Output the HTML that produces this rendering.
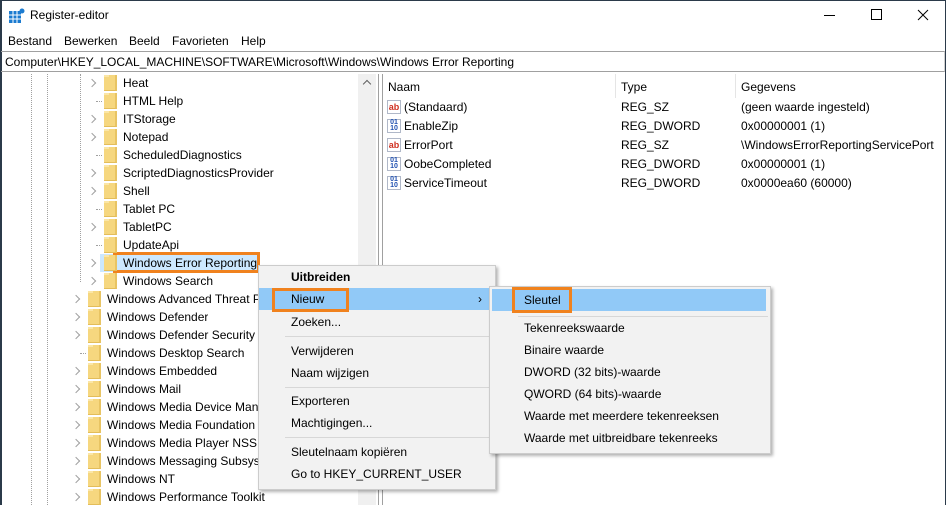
<!DOCTYPE html>
<html><head><meta charset="utf-8"><style>
*{margin:0;padding:0;box-sizing:border-box}
body{width:946px;height:505px;overflow:hidden;background:#fff;font-family:"Liberation Sans",sans-serif;font-size:12px;color:#000;position:relative}
.a{position:absolute;white-space:nowrap}
.t{position:absolute;white-space:nowrap;line-height:18px}
.f{position:absolute;width:13px;height:16px;background:#f6d77f;border-right:2px solid #e8c463;border-bottom:1px solid #e3bd5a}
.f::before{content:"";position:absolute;left:0;top:0;width:5px;height:2px;background:#fbe6a6}
.ch{position:absolute;width:6px;height:6px;border-right:1px solid #a0a0a0;border-top:1px solid #a0a0a0;transform:rotate(45deg)}
.dv{position:absolute;width:0;border-left:1px dotted #a0a0a0}
.dh{position:absolute;height:0;border-top:1px dotted #a0a0a0}
.ico{position:absolute;width:14px;height:14px;border:1px solid #b0b8c8;background:#fff;font-size:9px;font-weight:bold;line-height:12px;text-align:center}
.mi{position:absolute;left:291px;line-height:14px}
.si{position:absolute;left:524px;line-height:14px}
.sep{position:absolute;height:1px;background:#d7d7d7}
</style></head><body>
<div class="a" style="left:0;top:0;width:2px;height:505px;background:#2b3a4a"></div>
<div class="a" style="right:0;top:0;width:1px;height:505px;background:#2b3a4a"></div>
<div class="a" style="left:0;top:0;width:946px;height:1px;background:#2b3a4a"></div>
<svg class="a" style="left:9px;top:8px" width="16" height="16" viewBox="0 0 16 16">
<rect x="0" y="3" width="12" height="12" fill="#1b7bd0"/>
<g stroke="#fff" stroke-width="1"><line x1="4" y1="3" x2="4" y2="15"/><line x1="8" y1="3" x2="8" y2="15"/><line x1="0" y1="7" x2="12" y2="7"/><line x1="0" y1="11" x2="12" y2="11"/></g>
<circle cx="13" cy="3" r="2.5" fill="#1b7bd0"/></svg>
<div class="a" style="left:30px;top:8px;font-size:12px">Register-editor</div>
<div class="a" style="left:824px;top:15px;width:11px;height:1px;background:#000"></div>
<div class="a" style="left:871px;top:9px;width:11px;height:11px;border:1px solid #000"></div>
<svg class="a" style="left:917px;top:9px" width="12" height="12"><path d="M1 1L11 11M11 1L1 11" stroke="#000" stroke-width="1"/></svg>
<div class="a" style="left:8px;top:34px">Bestand</div>
<div class="a" style="left:64px;top:34px">Bewerken</div>
<div class="a" style="left:129px;top:34px">Beeld</div>
<div class="a" style="left:172px;top:34px">Favorieten</div>
<div class="a" style="left:241px;top:34px">Help</div>
<div class="a" style="left:1px;top:51px;width:944px;height:21px;border-top:1px solid #a0a0a0;border-bottom:1px solid #a0a0a0;border-right:1px solid #d0d0d0"></div>
<div class="a" style="left:5px;top:55px">Computer\HKEY_LOCAL_MACHINE\SOFTWARE\Microsoft\Windows\Windows Error Reporting</div>
<div class="dv" style="left:31px;top:74px;height:431px"></div>
<div class="dv" style="left:47px;top:74px;height:431px"></div>
<div class="dv" style="left:80px;top:74px;height:208px"></div>
<div class="dh" style="left:96px;top:101px;width:6px"></div>
<div class="dh" style="left:96px;top:155px;width:6px"></div>
<div class="dh" style="left:96px;top:209px;width:6px"></div>
<div class="dh" style="left:96px;top:245px;width:6px"></div>
<div class="dh" style="left:80px;top:353px;width:6px"></div>
<div class="a" style="left:100px;top:254px;width:158px;height:18px;background:#cce8ff"></div>
<div class="a" style="left:113px;top:252px;width:147px;height:21px;border:3px solid #f0821e"></div>
<div id="tree"></div>
<div class="a" style="left:358px;top:74px;width:18px;height:431px;background:#f0f0f0"></div>
<div class="ch" style="left:364px;top:81px;transform:rotate(-45deg);border-color:#606060"></div>
<div class="a" style="left:378px;top:74px;width:1px;height:431px;background:#a0a0a0"></div>
<div class="a" style="left:382px;top:74px;width:1px;height:431px;background:#a0a0a0"></div>
<div class="a" style="left:388px;top:80px">Naam</div>
<div class="a" style="left:615px;top:74px;width:1px;height:24px;background:#e5e5e5"></div>
<div class="a" style="left:621px;top:80px">Type</div>
<div class="a" style="left:735px;top:74px;width:1px;height:24px;background:#e5e5e5"></div>
<div class="a" style="left:741px;top:80px">Gegevens</div>
<div id="list"></div>
<div class="a" style="left:258px;top:265px;width:238px;height:225px;background:#f2f2f2;border:1px solid #ccc;box-shadow:2px 2px 3px rgba(0,0,0,.3)"></div>
<div class="a" style="left:259px;top:288px;width:236px;height:22px;background:#91c9f7"></div>
<div class="a" style="left:272px;top:288px;width:77px;height:24px;border:3px solid #f0821e"></div>
<div class="mi" style="top:270px;font-weight:bold">Uitbreiden</div>
<div class="mi" style="top:292px">Nieuw</div>
<div class="a" style="left:478px;top:292px">›</div>
<div class="mi" style="top:315px">Zoeken...</div>
<div class="sep" style="left:285px;top:336px;width:207px"></div>
<div class="mi" style="top:344px">Verwijderen</div>
<div class="mi" style="top:366px">Naam wijzigen</div>
<div class="sep" style="left:285px;top:387px;width:207px"></div>
<div class="mi" style="top:394px">Exporteren</div>
<div class="mi" style="top:416px">Machtigingen...</div>
<div class="sep" style="left:285px;top:437px;width:207px"></div>
<div class="mi" style="top:445px">Sleutelnaam kopiëren</div>
<div class="mi" style="top:467px">Go to HKEY_CURRENT_USER</div>
<div class="a" style="left:489px;top:286px;width:282px;height:168px;background:#f2f2f2;border:1px solid #ccc;box-shadow:2px 2px 3px rgba(0,0,0,.3)"></div>
<div class="a" style="left:492px;top:289px;width:274px;height:22px;background:#91c9f7"></div>
<div class="a" style="left:512px;top:287px;width:60px;height:26px;border:3px solid #f0821e"></div>
<div class="si" style="top:293px">Sleutel</div>
<div class="sep" style="left:518px;top:316px;width:250px"></div>
<div class="si" style="top:321px">Tekenreekswaarde</div>
<div class="si" style="top:343px">Binaire waarde</div>
<div class="si" style="top:365px">DWORD (32 bits)-waarde</div>
<div class="si" style="top:387px">QWORD (64 bits)-waarde</div>
<div class="si" style="top:409px">Waarde met meerdere tekenreeksen</div>
<div class="si" style="top:431px">Waarde met uitbreidbare tekenreeks</div>
<script>
var T=[["Heat",2,1],["HTML Help",2,0],["ITStorage",2,1],["Notepad",2,1],["ScheduledDiagnostics",2,0],["ScriptedDiagnosticsProvider",2,1],["Shell",2,1],["Tablet PC",2,0],["TabletPC",2,1],["UpdateApi",2,0],["Windows Error Reporting",2,1],["Windows Search",2,1],["Windows Advanced Threat Protection",1,1],["Windows Defender",1,1],["Windows Defender Security Center",1,1],["Windows Desktop Search",1,0],["Windows Embedded",1,1],["Windows Mail",1,1],["Windows Media Device Manager",1,1],["Windows Media Foundation",1,1],["Windows Media Player NSS",1,1],["Windows Messaging Subsystem",1,1],["Windows NT",1,1],["Windows Performance Toolkit",1,1]];
var h="";T.forEach(function(r,i){var y=74+i*18;var fx=r[1]==2?104:88;var tx=r[1]==2?123:107;
if(r[2])h+='<div class="ch" style="left:'+(fx-15)+'px;top:'+(y+6)+'px"></div>';
h+='<div class="f" style="left:'+fx+'px;top:'+(y+1)+'px"></div>';
h+='<div class="t" style="left:'+tx+'px;top:'+y+'px;'+(tx==107?'max-width:251px;overflow:hidden':'')+'">'+r[0]+'</div>';});
document.getElementById("tree").innerHTML=h;
var L=[["ab","(Standaard)","REG_SZ","(geen waarde ingesteld)"],["01","EnableZip","REG_DWORD","0x00000001 (1)"],["ab","ErrorPort","REG_SZ","\\WindowsErrorReportingServicePort"],["01","OobeCompleted","REG_DWORD","0x00000001 (1)"],["01","ServiceTimeout","REG_DWORD","0x0000ea60 (60000)"]];
h="";L.forEach(function(r,i){var y=98+i*19;
h+=r[0]=="ab"?'<div class="ico" style="left:387px;top:'+(y+2)+'px;color:#d03020">ab</div>':'<div class="ico" style="left:387px;top:'+(y+2)+'px;color:#2050b0;font-size:7px;line-height:6px">01<br>10</div>';
h+='<div class="t" style="left:404px;top:'+y+'px">'+r[1]+'</div><div class="t" style="left:621px;top:'+y+'px">'+r[2]+'</div><div class="t" style="left:741px;top:'+y+'px">'+r[3]+'</div>';});
document.getElementById("list").innerHTML=h;
</script>
</body></html>
